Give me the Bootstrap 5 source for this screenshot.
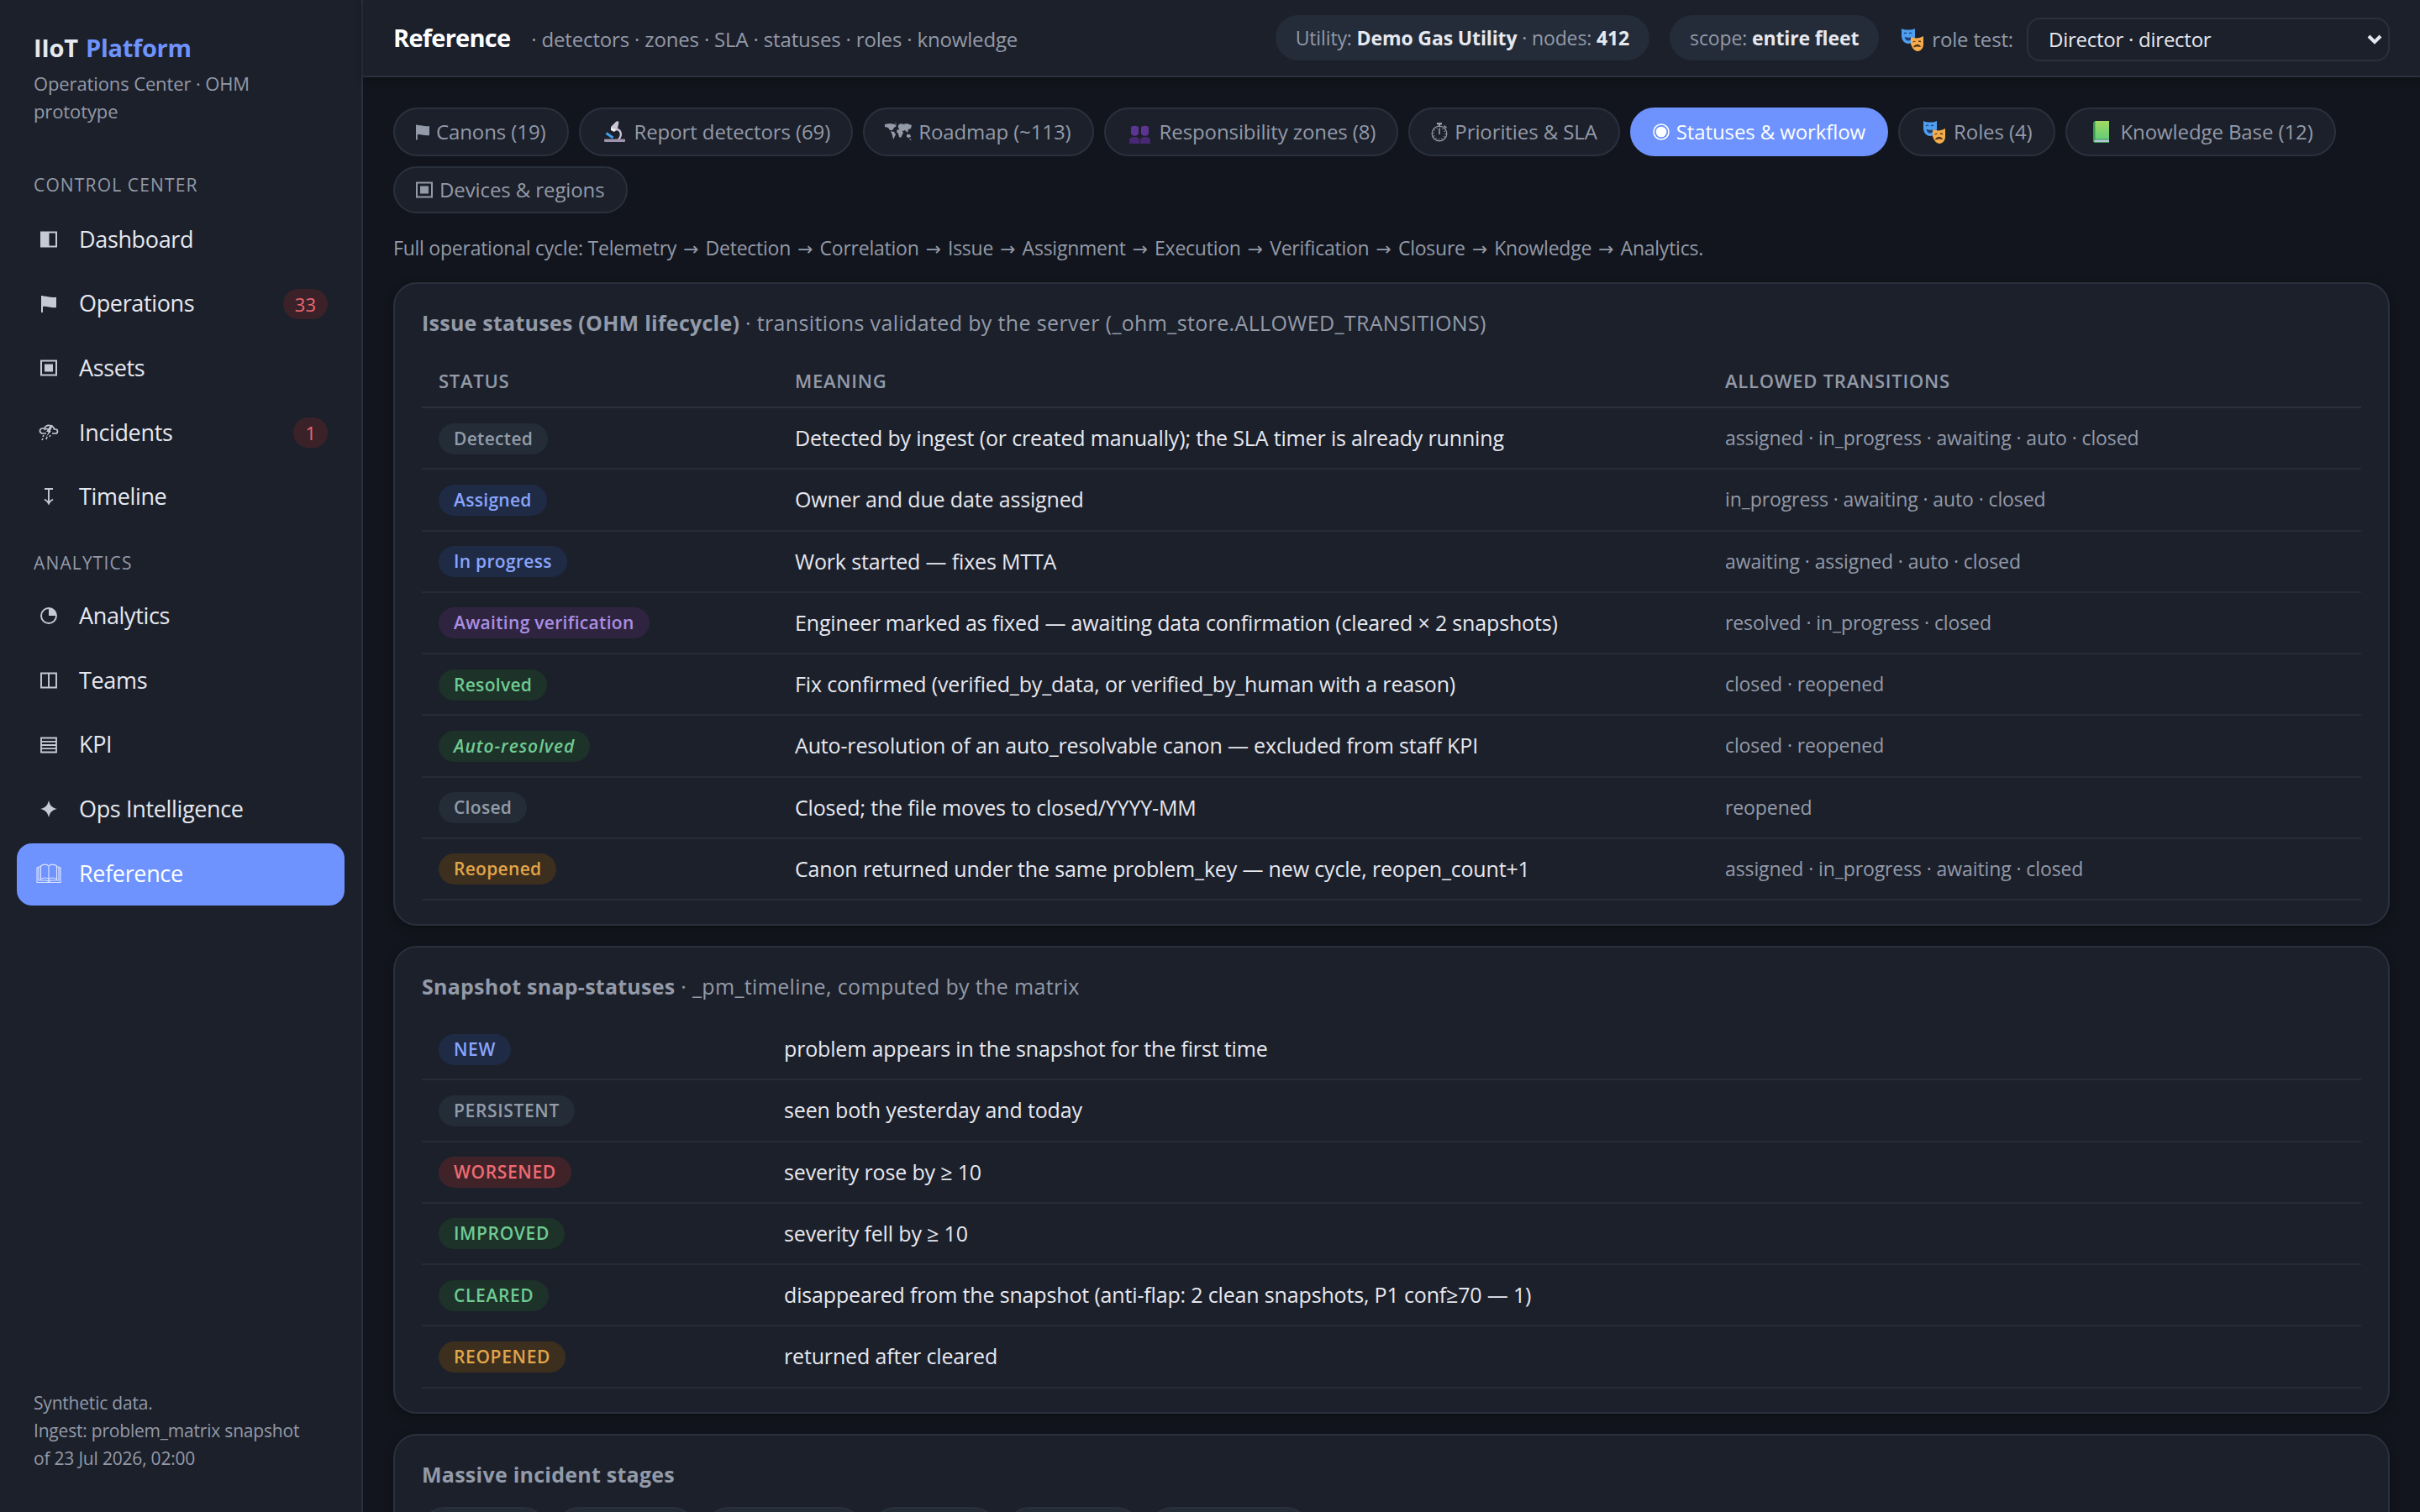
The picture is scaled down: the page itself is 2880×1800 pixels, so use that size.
<!DOCTYPE html>
<html lang="en" data-bs-theme="dark">
<head>
    <meta charset="UTF-8">
    <meta name="viewport" content="width=device-width, initial-scale=1.0">
    <title>Reference - IIoT Platform</title>
    <link href="https://cdn.jsdelivr.net/npm/bootstrap@5.3.0/dist/css/bootstrap.min.css" rel="stylesheet">
    <style>
        body {
            background: #12151d;
            color: #e6e8ef;
            font-family: "Open Sans", "Noto Sans", sans-serif;
            font-size: 25px;
            height: 1800px;
            overflow: hidden;
        }
        svg { fill: currentColor; flex-shrink: 0; }
        .muted { color: #939aa8; }

        /* sidebar */
        .sidebar { width: 432px; background: #1c202b; border-right: 2px solid #2b303d; padding: 37px 20px 47px; }
        .brand { font-size: 29px; line-height: 40px; font-weight: 700; letter-spacing: -.3px; word-spacing: 2px; padding-left: 20px; }
        .brand span { color: #6e93ff; }
        .brand-sub { font-size: 22px; line-height: 33px; letter-spacing: -.12px; padding: 6px 60px 0 20px; margin-bottom: 56px; }
        .nav-label { font-size: 21px; line-height: 30px; letter-spacing: 1.15px; padding-left: 20px; margin-bottom: 14px; }
        .side-nav { gap: 2.6px; margin-bottom: 26px; }
        .side-nav .nav-link {
            height: 74px; padding: 0 20px 2px 22px; border-radius: 18px; color: #e6e8ef;
            font-size: 27px; letter-spacing: -.35px;
        }
        .side-nav .nav-link svg { width: 32px; height: 24px; margin-right: 20px; color: #c6cad4; }
        .side-nav .nav-link.active { background: #6e93ff; color: #fff; }
        .side-nav .nav-link.active svg { color: #dfe6ff; }
        .count { background: #3b2229; color: #ee6570; font-size: 22px; line-height: 36px; padding: 0 14px; border-radius: 18px; letter-spacing: 0; }
        .side-foot { font-size: 21px; line-height: 33px; letter-spacing: -.2px; padding-left: 20px; }

        /* top bar */
        .topbar { height: 92px; background: #1c202b; border-bottom: 2px solid #2b303d; padding: 0 36px; box-shadow: 0 3px 10px rgba(0, 0, 0, .3); }
        .topbar h1 { font-size: 29px; font-weight: 700; letter-spacing: -.75px; margin: 0 25px 0 0; }
        .topbar .crumbs { font-size: 24px; letter-spacing: -.16px; padding-top: 3px; }
        .info-chip { background: #232c38; border-radius: 27px; font-size: 23px; line-height: 54px; letter-spacing: -.13px; padding: 0 24px; }
        .info-chip b { color: #e6e8ef; }
        .role-select {
            width: 432px; height: 52px; border: 2px solid #2b303d; border-radius: 16px; color: #e6e8ef;
            font-size: 24px; letter-spacing: -.25px; padding: 0 24px; line-height: 48px; background-color: #1c202b;
            background-image: url("data:image/svg+xml,%3Csvg xmlns='http://www.w3.org/2000/svg' viewBox='0 0 18 12'%3E%3Cpath d='M2 2l7 7 7-7' fill='none' stroke='%23e6e8ef' stroke-width='4'/%3E%3C/svg%3E");
            background-size: 18px 12px; background-position: right 7px center;
        }

        /* tabs */
        .page { padding: 36px 36px 0; }
        .ref-tabs { gap: 12px; margin-bottom: 24px; }
        .ref-tabs .nav-link {
            height: 56px; padding: 0 25px; border: 2px solid #2b303d; border-radius: 29px; background: #1c202b;
            color: #939aa8; font-size: 24px; letter-spacing: -.1px; line-height: 50px;
        }
        .ref-tabs .tall { height: 58px; }
        .ref-tabs .nav-link.active { background: #6e93ff; border-color: #6e93ff; color: #fff; }
        .ref-tabs svg { width: 20px; height: 24px; margin-right: 8px; }
        .ref-tabs svg.emoji { width: 28px; height: 28px; margin: 0 9px 0 2px; }
        .cycle { font-size: 23px; line-height: 34px; letter-spacing: -.24px; margin-bottom: 24px; }
        .cycle i { display: inline-block; width: 23px; text-align: center; font: 22px/20px "DejaVu Sans", sans-serif; }

        /* cards and tables */
        .panel { background: #1c202b; border: 2px solid #2b303d; border-radius: 28px; padding: 29px 32px 28px; margin-bottom: 24px; box-shadow: 0 3px 12px rgba(0, 0, 0, .3); }
        .panel h2 { font-size: 25px; line-height: 35px; font-weight: 700; letter-spacing: .25px; color: #939aa8; margin-bottom: 21px; }
        .panel h2 span { font-weight: 400; letter-spacing: .36px; }
        .ref-table { width: 100%; table-layout: fixed; border-collapse: separate; border-spacing: 0; }
        .ref-table th { height: 63px; padding: 0 20px; border-bottom: 2px solid #2b303d; color: #939aa8; font-size: 22px; font-weight: 600; letter-spacing: .75px; }
        .ref-table td { height: 73.25px; padding: 0 20px 1px; border-bottom: 2px solid #252b37; letter-spacing: -.16px; line-height: 34px; }
        .ref-table td.next { color: #939aa8; font-size: 23px; letter-spacing: -.1px; }
        .status { display: inline-block; vertical-align: middle; font-size: 21px; font-weight: 600; line-height: 37px; letter-spacing: .3px; border-radius: 19px; padding: 0 18px; }
        .status.fst-italic { letter-spacing: .95px; }
        .snaps .status { letter-spacing: .65px; }
        .st-gray { background: #232c37; color: #949ca9; }
        .st-blue { background: #1f2a45; color: #8aa5fb; }
        .st-purple { background: #2f243f; color: #a98ee2; }
        .st-green { background: #1d3228; color: #6fca94; }
        .st-red { background: #402329; color: #ee6a70; }
        .st-amber { background: #3c2f1e; color: #e2a54a; }
        .stage { height: 54px; border: 2px solid #2b303d; border-radius: 27px; background: #232b37; }
    </style>
</head>
<body class="d-flex">

    <!-- icon sprite -->
    <svg class="position-absolute" width="0" height="0">
        <symbol id="i-dash" viewBox="0 0 20 20"><path d="M0 .5h20v19H0z M10.500 2.500v15h7.500v-15z" fill-rule="evenodd"/></symbol>
        <symbol id="i-flag" viewBox="0 0 18 20"><path d="M0 0h2v.6c4-.6 8 2 16 1.100V14C11 15 7 12 2 13v7H0z"/></symbol>
        <symbol id="i-box" viewBox="0 0 20 20"><path d="M0 .5h20v19H0z M2 2.500v15h16v-15z" fill-rule="evenodd"/><path d="M5 5.500h10v9H5z"/></symbol>
        <symbol id="i-storm" viewBox="0 0 24 20"><path d="M9 11H4.500a3 3 0 010-6H7a5 5 0 018-2.500A4 4 0 0118.500 6h1.500a2.500 2.500 0 010 5h-4M12 10l4-9M7 7c1-2 4-2 5 0" fill="none" stroke="currentColor" stroke-width="1.700"/><path d="M13 3l-4 6h3l-3 6 6-7h-3l3-5z"/><path d="M6 13l-1 2M10 15l-1 3M14 13l-1 2M5 17l-1 2" stroke="currentColor" stroke-width="1.600"/></symbol>
        <symbol id="i-down" viewBox="0 0 12 20"><path d="M1 1h10M6 1v17M1 13.500c2 1 4 2.500 5 5 1-2.500 3-4 5-5" fill="none" stroke="currentColor" stroke-width="1.900"/></symbol>
        <symbol id="i-pie" viewBox="0 0 20 20"><circle cx="10" cy="10" r="9" fill="none" stroke="currentColor" stroke-width="1.900"/><path d="M10 10V1a9 9 0 019 9z"/></symbol>
        <symbol id="i-cols" viewBox="0 0 20 20"><path d="M1 1.500h18v17H1zM10 1v18" fill="none" stroke="currentColor" stroke-width="1.900"/></symbol>
        <symbol id="i-rows" viewBox="0 0 20 20"><path d="M1 1.500h18v17H1zM1 5.800h18M1 10h18M1 14.200h18" fill="none" stroke="currentColor" stroke-width="1.800"/></symbol>
        <symbol id="i-star" viewBox="0 0 20 20"><path d="M10 0c1.500 6 4 8.500 10 10-6 1.500-8.500 4-10 10-1.500-6-4-8.500-10-10 6-1.500 8.500-4 10-10z"/></symbol>
        <symbol id="i-read" viewBox="0 0 30 24"><path d="M15 3c-2-2.500-7-2.500-9.500 0v15.500c3-2 7.500-2 9.500 0 2-2 6.500-2 9.500 0V3C22 .5 17 .5 15 3zM15 3v19M5.500 4H3v16h9l3 1.500 3-1.500h9V4h-2.500M3 5H1v17.500h28V5h-2" fill="none" stroke="currentColor" stroke-width="1.100"/></symbol>
        <symbol id="i-map" viewBox="0 0 34 24"><path d="M1 3l6-1 6 1 2 2-3 2-2 3-3 0-2-3-4-1zM8 11l4 1 2 3-3 6-1-5zM17 4l3-2 3 1 4-1 6 2-1 4-3 1-1 4-3-3-2 1-4-1-2-3zM16 9l5 1 2 3-3 6-2-1-1-4-2-2zM27 15l4 0 1 3-3 1-2-1z"/><path d="M13 1l2 1-1 1zM30 20l3 1-2 1z"/></symbol>
        <symbol id="i-watch" viewBox="0 0 20 24"><circle cx="10" cy="14" r="8.800" fill="none" stroke="currentColor" stroke-width="1.300"/><circle cx="10" cy="14" r="6.800" fill="none" stroke="currentColor" stroke-width="1.500" stroke-dasharray="1 2.560"/><path d="M9.200 8h1.600v7H9.200zM7 1h6v2.600H7zM9 3h2v3H9zM16 4l3 2.500-1 1.300-3-2.500z"/></symbol>
        <symbol id="i-target" viewBox="0 0 20 20"><circle cx="10" cy="10" r="9" fill="none" stroke="currentColor" stroke-width="1.600"/><circle cx="10" cy="10" r="6.300"/></symbol>
        <symbol id="i-scope" viewBox="0 0 28 28"><path d="M15 11c6 0 8 7 3 12" fill="none" stroke="#cfc6d8" stroke-width="2.300"/><path d="M3.500 15.500l8 5.500" stroke="#3f9fe8" stroke-width="3"/><path d="M9 8l6-6 2-1 1.500 1.500L17 10l-3 3.500-4.500-1.500z" fill="#cbc4d2"/><path d="M9 9l6 2-2 3-4-2z" fill="#f1edf4"/><rect x="1" y="22.500" width="25" height="3.500" rx="1" fill="#a093ae"/></symbol>
        <symbol id="i-people" viewBox="0 0 28 28"><path d="M3 9c0-3 9-3 9 0v6c0 5-9 5-9 0zM15 9c0-3 9-3 9 0v6c0 5-9 5-9 0z" fill="#5c3592"/><path d="M1 28v-4c0-3 3-4 6-4s6 1 6 4v4zM14 28v-4c0-3 3-4 6-4s6 1 6 4v4z" fill="#472872"/></symbol>
        <symbol id="i-masks" viewBox="0 0 28 28"><path d="M1 1c4 2 12 2 16 0v9c0 6-4 9-8 9s-8-4-8-9z" fill="#4f9ff0"/><path d="M4 7q2-2 3 0M10 7q2-2 3 0" fill="none" stroke="#1d3f78" stroke-width="1.200"/><path d="M4.500 10.500q4.500 2.500 9 0-1 5-4.500 5t-4.500-5" fill="#1d3f78"/><path d="M12 11c5 2 10 2 15-1v10c0 5-4 8-7 8s-7-4-8-9z" fill="#f5ac4b"/><path d="M14.500 17l3-1M21 16l3 .5M15.500 23q4-5 8-.5-4-1.500-8 .5" fill="#55331c" stroke="#55331c" stroke-width="1.300"/></symbol>
        <symbol id="i-book" viewBox="0 0 28 28"><path d="M4 3l2-2h17v26H5.500L4 25.500z" fill="#3c9a52"/><path d="M6.500 1H23v21.500H6.500z" fill="url(#cover)"/><path d="M5.500 23.500H23V26H5.500z" fill="#b7c6d8"/></symbol>
        <linearGradient id="cover" x2="0" y2="1"><stop stop-color="#a3da62"/><stop offset="1" stop-color="#63cc78"/></linearGradient>
    </svg>

    <aside class="sidebar d-flex flex-column flex-shrink-0">
        <div class="brand">IIoT <span>Platform</span></div>
        <div class="brand-sub muted">Operations Center · OHM prototype</div>

        <div class="nav-label muted">CONTROL CENTER</div>
        <nav class="side-nav nav flex-column">
            <a class="nav-link d-flex align-items-center" href="#"><svg><use href="#i-dash" y="2" height="20"/></svg>Dashboard</a>
            <a class="nav-link d-flex align-items-center" href="#"><svg><use href="#i-flag" y="2" height="20"/></svg>Operations<span class="count ms-auto">33</span></a>
            <a class="nav-link d-flex align-items-center" href="#"><svg><use href="#i-box" y="2" height="20"/></svg>Assets</a>
            <a class="nav-link d-flex align-items-center" href="#"><svg><use href="#i-storm" y="2" height="20"/></svg>Incidents<span class="count ms-auto">1</span></a>
            <a class="nav-link d-flex align-items-center" href="#"><svg><use href="#i-down" y="2" height="20"/></svg>Timeline</a>
        </nav>

        <div class="nav-label muted mb-2 pb-1">ANALYTICS</div>
        <nav class="side-nav nav flex-column">
            <a class="nav-link d-flex align-items-center" href="#"><svg><use href="#i-pie" y="2" height="20"/></svg>Analytics</a>
            <a class="nav-link d-flex align-items-center" href="#"><svg><use href="#i-cols" y="2" height="20"/></svg>Teams</a>
            <a class="nav-link d-flex align-items-center" href="#"><svg><use href="#i-rows" y="2" height="20"/></svg>KPI</a>
            <a class="nav-link d-flex align-items-center" href="#"><svg><use href="#i-star" y="2" height="20"/></svg>Ops Intelligence</a>
            <a class="nav-link active d-flex align-items-center" href="#"><svg><use href="#i-read"/></svg>Reference</a>
        </nav>

        <div class="side-foot muted mt-auto">Synthetic data.<br>Ingest: problem_matrix snapshot<br>of 23 Jul 2026, 02:00</div>
    </aside>

    <div class="flex-grow-1">
        <header class="topbar d-flex align-items-center">
            <h1>Reference</h1>
            <span class="crumbs muted">· detectors · zones · SLA · statuses · roles · knowledge</span>
            <div class="info-chip muted ms-auto">Utility: <b>Demo Gas Utility</b> · nodes: <b>412</b></div>
            <div class="info-chip muted ms-4">scope: <b>entire fleet</b></div>
            <label class="crumbs muted d-flex align-items-center" for="role"><svg width="28" height="28" style="margin: 0 9px 0 26px"><use href="#i-masks"/></svg>role test:</label>
            <select class="form-select role-select ms-3 mt-1" id="role">
                <option>Director · director</option>
            </select>
        </header>

        <main class="page">
            <nav class="ref-tabs nav">
                <a class="nav-link tall d-flex align-items-center" href="#"><svg style="width: 16px"><use href="#i-flag" y="3" height="19"/></svg>Canons (19)</a>
                <a class="nav-link tall d-flex align-items-center" href="#"><svg class="emoji"><use href="#i-scope"/></svg>Report detectors (69)</a>
                <a class="nav-link tall d-flex align-items-center" href="#"><svg style="width: 34px; margin: 0 7px 0 -2px"><use href="#i-map"/></svg>Roadmap (~113)</a>
                <a class="nav-link tall d-flex align-items-center" href="#"><svg class="emoji"><use href="#i-people"/></svg>Responsibility zones (8)</a>
                <a class="nav-link tall d-flex align-items-center" href="#"><svg><use href="#i-watch"/></svg>Priorities &amp; SLA</a>
                <a class="nav-link tall active d-flex align-items-center" href="#"><svg><use href="#i-target" y="2" height="20"/></svg>Statuses &amp; workflow</a>
                <a class="nav-link tall d-flex align-items-center" href="#"><svg class="emoji"><use href="#i-masks"/></svg>Roles (4)</a>
                <a class="nav-link tall d-flex align-items-center" href="#"><svg class="emoji"><use href="#i-book"/></svg>Knowledge Base (12)</a>
                <a class="nav-link d-flex align-items-center" href="#"><svg><use href="#i-box" y="2" height="20"/></svg>Devices &amp; regions</a>
            </nav>

            <p class="cycle muted">Full operational cycle: Telemetry <i>→</i> Detection <i>→</i> Correlation <i>→</i> Issue <i>→</i> Assignment <i>→</i> Execution <i>→</i> Verification <i>→</i> Closure <i>→</i> Knowledge <i>→</i> Analytics.</p>

            <section class="panel">
                <h2>Issue statuses (OHM lifecycle) <span>· transitions validated by the server (_ohm_store.ALLOWED_TRANSITIONS)</span></h2>
                <table class="ref-table">
                    <colgroup><col style="width: 424px"><col style="width: 1107px"><col></colgroup>
                    <thead>
                        <tr><th>STATUS</th><th>MEANING</th><th>ALLOWED TRANSITIONS</th></tr>
                    </thead>
                    <tbody>
                        <tr>
                            <td><span class="status st-gray">Detected</span></td>
                            <td>Detected by ingest (or created manually); the SLA timer is already running</td>
                            <td class="next">assigned · in_progress · awaiting · auto · closed</td>
                        </tr>
                        <tr>
                            <td><span class="status st-blue">Assigned</span></td>
                            <td>Owner and due date assigned</td>
                            <td class="next">in_progress · awaiting · auto · closed</td>
                        </tr>
                        <tr>
                            <td><span class="status st-blue">In progress</span></td>
                            <td>Work started — fixes MTTA</td>
                            <td class="next">awaiting · assigned · auto · closed</td>
                        </tr>
                        <tr>
                            <td><span class="status st-purple">Awaiting verification</span></td>
                            <td>Engineer marked as fixed — awaiting data confirmation (cleared × 2 snapshots)</td>
                            <td class="next">resolved · in_progress · closed</td>
                        </tr>
                        <tr>
                            <td><span class="status st-green">Resolved</span></td>
                            <td>Fix confirmed (verified_by_data, or verified_by_human with a reason)</td>
                            <td class="next">closed · reopened</td>
                        </tr>
                        <tr>
                            <td><span class="status st-green fst-italic">Auto-resolved</span></td>
                            <td>Auto-resolution of an auto_resolvable canon — excluded from staff KPI</td>
                            <td class="next">closed · reopened</td>
                        </tr>
                        <tr>
                            <td><span class="status st-gray">Closed</span></td>
                            <td>Closed; the file moves to closed/YYYY-MM</td>
                            <td class="next">reopened</td>
                        </tr>
                        <tr>
                            <td><span class="status st-amber">Reopened</span></td>
                            <td>Canon returned under the same problem_key — new cycle, reopen_count+1</td>
                            <td class="next">assigned · in_progress · awaiting · closed</td>
                        </tr>
                    </tbody>
                </table>
            </section>

            <section class="panel">
                <h2>Snapshot snap-statuses <span>· _pm_timeline, computed by the matrix</span></h2>
                <table class="ref-table snaps">
                    <colgroup><col style="width: 411px"><col></colgroup>
                    <tbody>
                        <tr><td><span class="status st-blue">NEW</span></td><td>problem appears in the snapshot for the first time</td></tr>
                        <tr><td><span class="status st-gray">PERSISTENT</span></td><td>seen both yesterday and today</td></tr>
                        <tr><td><span class="status st-red">WORSENED</span></td><td>severity rose by ≥ 10</td></tr>
                        <tr><td><span class="status st-green">IMPROVED</span></td><td>severity fell by ≥ 10</td></tr>
                        <tr><td><span class="status st-green">CLEARED</span></td><td>disappeared from the snapshot (anti-flap: 2 clean snapshots, P1 conf≥70 — 1)</td></tr>
                        <tr><td><span class="status st-amber">REOPENED</span></td><td>returned after cleared</td></tr>
                    </tbody>
                </table>
            </section>

            <section class="panel">
                <h2>Massive incident stages</h2>
                <div class="d-flex" style="gap: 12px">
                    <div class="stage" style="width: 148px"></div>
                    <div class="stage" style="width: 166px"></div>
                    <div class="stage" style="width: 186px"></div>
                    <div class="stage" style="width: 148px"></div>
                    <div class="stage" style="width: 158px"></div>
                    <div class="stage" style="width: 190px"></div>
                </div>
            </section>
        </main>
    </div>

    <script src="https://cdn.jsdelivr.net/npm/bootstrap@5.3.0/dist/js/bootstrap.bundle.min.js"></script>
</body>
</html>
